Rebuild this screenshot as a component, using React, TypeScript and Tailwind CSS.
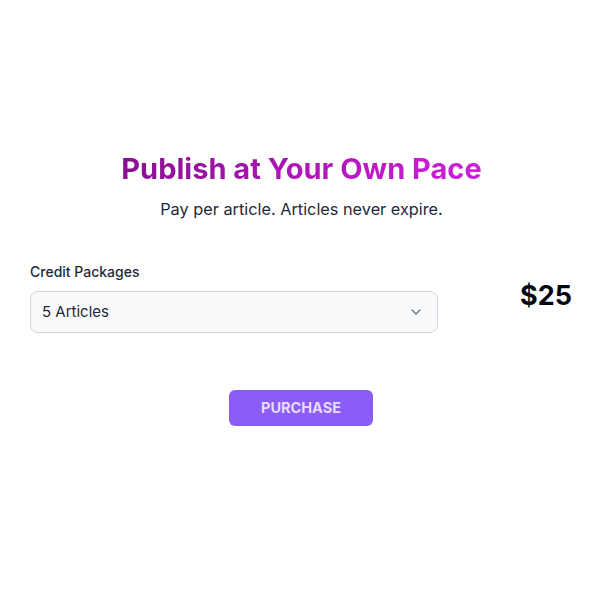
import { ChevronDown } from "lucide-react";

const packages = ["5 Articles", "10 Articles", "25 Articles"];

export default function App() {
  return (
    <div
      className="h-[600px] w-[600px] bg-white pt-[151px] text-gray-900"
      style={{ fontFamily: "Inter, 'Noto Sans', sans-serif" }}
    >
      {/* Heading */}
      <div className="pl-[3px] text-center">
        <h1 className="inline-block bg-gradient-to-r from-[#8a0f92] to-[#d11fdb] bg-clip-text text-[29px] leading-[35px] font-bold text-transparent">
          Publish at Your Own Pace
        </h1>
        <p className="mt-[13px] text-[16.3px] leading-[20px] text-gray-800">
          Pay per article. Articles never expire.
        </p>
      </div>

      {/* Package picker + price */}
      <div className="mt-[43px] flex items-start pl-[30px]">
        <div className="w-[408px]">
          <label className="block text-[14px] leading-[20px] font-medium text-gray-800">
            Credit Packages
          </label>
          <div className="relative mt-[9px]">
            <select className="h-[42px] w-full appearance-none rounded-lg border border-gray-300 bg-gray-50 pl-[11px] text-[15px] text-gray-800 outline-none">
              {packages.map((p) => (
                <option key={p}>{p}</option>
              ))}
            </select>
            <ChevronDown
              className="pointer-events-none absolute top-1/2 right-[14px] h-4 w-4 -translate-y-1/2 text-gray-500"
              strokeWidth={2}
            />
          </div>
        </div>

        <div className="ml-[82px] pt-[18px] text-[27px] leading-[32px] font-bold text-gray-950">
          $25
        </div>
      </div>

      {/* Purchase */}
      <div className="mt-[57px] flex justify-center pl-[2px]">
        <button className="h-[36px] w-[144px] rounded-md bg-[#8b5cf6] text-[14.5px] font-bold text-[#e6ddff]">
          PURCHASE
        </button>
      </div>
    </div>
  );
}
